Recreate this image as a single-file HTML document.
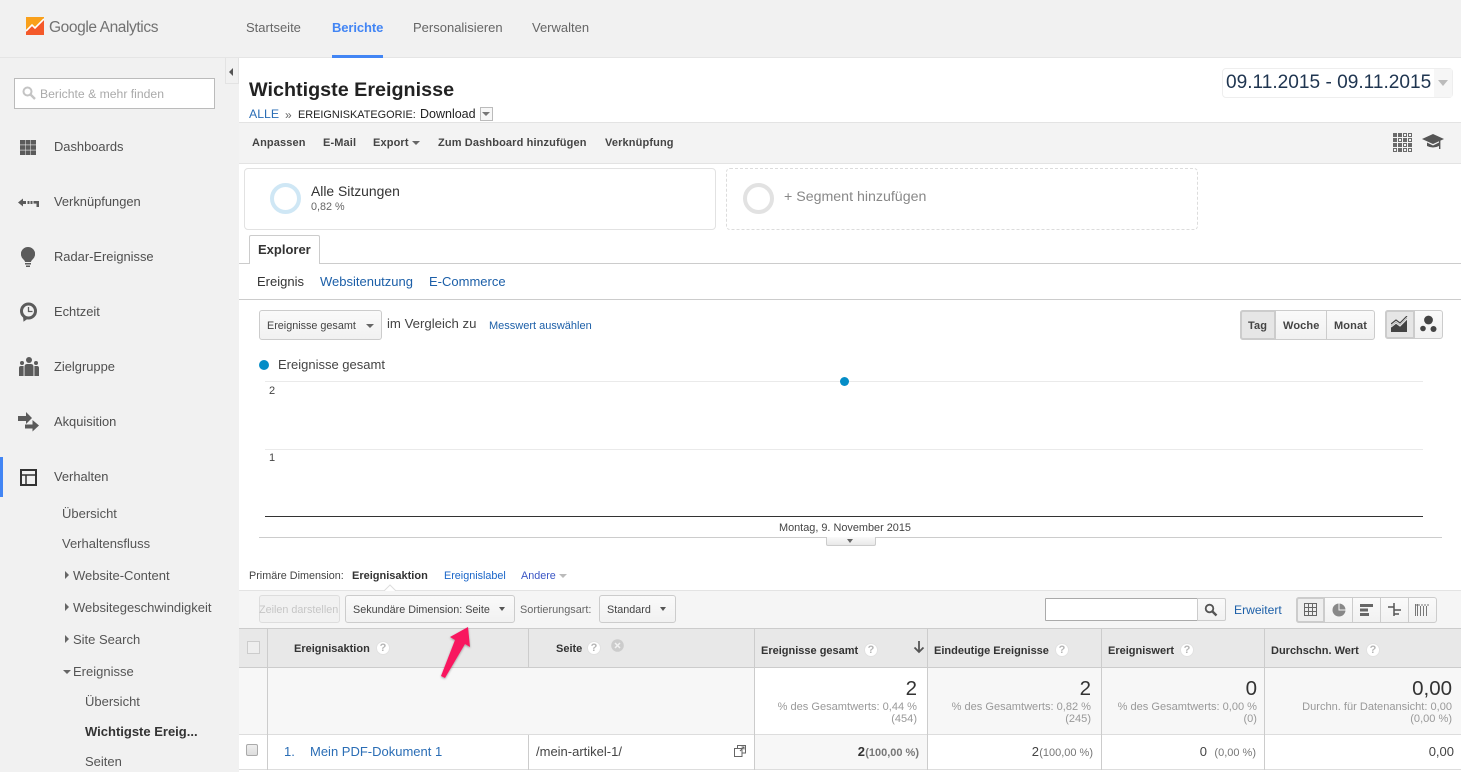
<!DOCTYPE html>
<html lang="de"><head><meta charset="utf-8"><title>Google Analytics</title>
<style>
*{box-sizing:border-box}
html,body{margin:0;padding:0}
body{width:1461px;height:772px;position:relative;overflow:hidden;background:#fff;font-family:"Liberation Sans",Arial,sans-serif;font-size:12px;color:#333}
.t{position:absolute;white-space:nowrap;line-height:16px;height:16px}
.b{position:absolute}
.r{text-align:right}
.s{font-size:12.9px;color:#4f4f4f}
.n{font-size:13px;color:#555}
.tb{font-size:11px;font-weight:bold;color:#444;letter-spacing:.13px}
.l{color:#1c5fa8}
.h{font-size:11px;font-weight:bold;color:#333}
.q{position:absolute;width:14px;height:14px;border-radius:50%;background:#fff;border:1px solid #e2e2e2;color:#b5b5b5;font-size:11px;font-weight:bold;line-height:12px;text-align:center}
.g{font-size:11.05px;color:#999}
.big{font-size:20.5px;color:#333;line-height:24px;height:24px}
.btn{position:absolute;border:1px solid #ccc;border-radius:3px;background:linear-gradient(#fafafa,#f1f1f1)}
.tri{position:absolute;width:0;height:0;border-left:4px solid transparent;border-right:4px solid transparent;border-top:4px solid #666}
svg{position:absolute;display:block}
</style></head><body>

<!-- top bar -->
<div class="b" style="left:0;top:0;width:1461px;height:58px;background:#f1f1f1;border-bottom:1px solid #e5e5e5"></div>
<svg style="left:26px;top:17px" width="18" height="18" viewBox="0 0 18 18"><rect width="18" height="18" fill="#f9a01b"/><path d="M0 18V14L6 8L9 11L18 3V18Z" fill="#f4592a"/><path d="M0 14L6 8L9 11L18 2" fill="none" stroke="#fff" stroke-width="1.600"/></svg>
<div class="t" style="left:49px;top:20px;font-size:15.500px;color:#727272;letter-spacing:-.4px">Google Analytics</div>
<div class="t" style="left:246px;top:20px;font-size:13px;color:#666">Startseite</div>
<div class="t" style="left:332px;top:20px;font-size:13px;font-weight:bold;color:#4285f4;letter-spacing:-.1px">Berichte</div>
<div class="b" style="left:332px;top:55px;width:51px;height:3px;background:#4285f4"></div>
<div class="t" style="left:413px;top:20px;font-size:13px;color:#666">Personalisieren</div>
<div class="t" style="left:532px;top:20px;font-size:13px;color:#666">Verwalten</div>

<!-- sidebar -->
<div class="b" style="left:0;top:58px;width:239px;height:714px;background:#f1f1f1"></div>
<div class="b" style="left:225px;top:58px;width:14px;height:26px;background:#f1f1f1;border:1px solid #e3e3e3;border-top:0"></div>
<div class="b" style="left:229px;top:68px;width:0;height:0;border-top:4px solid transparent;border-bottom:4px solid transparent;border-right:4px solid #555"></div>
<div class="b" style="left:14px;top:78px;width:201px;height:31px;background:#fff;border:1px solid #bbb"></div>
<svg style="left:22px;top:86px" width="14" height="14" viewBox="0 0 14 14"><circle cx="5.500" cy="5.500" r="4" fill="none" stroke="#c4c4c4" stroke-width="2"/><path d="M8.500 8.500L13 13" stroke="#c4c4c4" stroke-width="2.400"/></svg>
<div class="t" style="left:40px;top:86px;font-size:12.200px;color:#aaa">Berichte &amp; mehr finden</div>

<svg style="left:20px;top:140px" width="16" height="15" viewBox="0 0 16 15" fill="#5b5b5b"><rect width="5" height="4.600"/><rect x="5.500" width="5" height="4.600"/><rect x="11" width="5" height="4.600"/><rect y="5.200" width="5" height="4.600"/><rect x="5.500" y="5.200" width="5" height="4.600"/><rect x="11" y="5.200" width="5" height="4.600"/><rect y="10.400" width="5" height="4.600"/><rect x="5.500" y="10.400" width="5" height="4.600"/><rect x="11" y="10.400" width="5" height="4.600"/></svg>
<div class="t s" style="left:54px;top:139px">Dashboards</div>

<svg style="left:18px;top:197px" width="22" height="11" viewBox="0 0 22 11" fill="#5b5b5b"><path d="M0 5.500L5 1.500V4H8V7H5V9.500Z"/><rect x="9.500" y="4" width="2" height="3"/><rect x="12.500" y="4" width="2" height="3"/><rect x="15.500" y="4" width="5" height="2.600"/><rect x="18.500" y="4" width="2.500" height="6"/></svg>
<div class="t s" style="left:54px;top:194px">Verknüpfungen</div>

<svg style="left:21px;top:247px" width="14" height="21" viewBox="0 0 14 21" fill="#5b5b5b"><path d="M7 0A7 7 0 0 1 12 12C11 13 10 14 10 15H4C4 14 3 13 2 12A7 7 0 0 1 7 0Z"/><rect x="4" y="16" width="6" height="1.500"/><rect x="5" y="18.500" width="4" height="1.500"/></svg>
<div class="t s" style="left:54px;top:249px">Radar-Ereignisse</div>

<svg style="left:20px;top:302px" width="18" height="20" viewBox="0 0 18 20"><path d="M3 14L3.500 19.800L8 16.500Z" fill="#5b5b5b"/><circle cx="8.500" cy="9" r="7" fill="#f1f1f1" stroke="#5b5b5b" stroke-width="3"/><path d="M8.500 5V9.500H12.500" fill="none" stroke="#5b5b5b" stroke-width="1.300"/></svg>
<div class="t s" style="left:54px;top:304px">Echtzeit</div>

<svg style="left:19px;top:357px" width="20" height="19" viewBox="0 0 20 19" fill="#5b5b5b"><circle cx="10" cy="3" r="3"/><circle cx="3" cy="6" r="2"/><circle cx="17" cy="6" r="2"/><path d="M5.500 19V10Q5.500 7 8 7H12Q14.500 7 14.500 10V19Z"/><path d="M0 19V11Q0 9 2 9H4.600V19Z"/><path d="M15.400 19V9H18Q20 9 20 11V19Z"/></svg>
<div class="t s" style="left:54px;top:359px">Zielgruppe</div>

<svg style="left:18px;top:412px" width="21" height="20" viewBox="0 0 21 20" fill="#5b5b5b"><path d="M0 4H8V0L14 6L8 12V9H0Z"/><path d="M7 12.500H14.500V8L21 13.500L14.500 19.500V16.500H7Z"/></svg>
<div class="t s" style="left:54px;top:414px">Akquisition</div>

<div class="b" style="left:0;top:457px;width:3px;height:40px;background:#4285f4"></div>
<svg style="left:20px;top:469px" width="17" height="17" viewBox="0 0 17 17" fill="none" stroke="#333" stroke-width="1.500"><rect x="1" y="1" width="15" height="15" stroke-width="2"/><path d="M1 6H16M6 6V16"/></svg>
<div class="t s" style="left:54px;top:469px">Verhalten</div>

<div class="t n" style="left:62px;top:506px">Übersicht</div>
<div class="t n" style="left:62px;top:536px">Verhaltensfluss</div>
<div class="b" style="left:65px;top:571px;width:0;height:0;border-top:4px solid transparent;border-bottom:4px solid transparent;border-left:4px solid #666"></div>
<div class="t n" style="left:73px;top:568px">Website-Content</div>
<div class="b" style="left:65px;top:603px;width:0;height:0;border-top:4px solid transparent;border-bottom:4px solid transparent;border-left:4px solid #666"></div>
<div class="t n" style="left:73px;top:600px">Websitegeschwindigkeit</div>
<div class="b" style="left:65px;top:635px;width:0;height:0;border-top:4px solid transparent;border-bottom:4px solid transparent;border-left:4px solid #666"></div>
<div class="t n" style="left:73px;top:632px">Site Search</div>
<div class="tri" style="left:63px;top:670px"></div>
<div class="t n" style="left:73px;top:664px">Ereignisse</div>
<div class="t n" style="left:85px;top:694px">Übersicht</div>
<div class="t n" style="left:85px;top:724px;font-weight:bold;color:#333">Wichtigste Ereig...</div>
<div class="t n" style="left:85px;top:754px">Seiten</div>

<!-- title -->
<div class="t" style="left:249px;top:77px;font-size:19.750px;font-weight:bold;color:#222;line-height:26px;height:26px">Wichtigste Ereignisse</div>
<div class="t l" style="left:249px;top:106px;font-size:12.300px;color:#2a6db5">ALLE</div>
<div class="t" style="left:285px;top:107px;font-size:12px;color:#666">»</div>
<div class="t" style="left:298px;top:107px;font-size:10.900px;color:#222">EREIGNISKATEGORIE:</div>
<div class="t" style="left:420px;top:106px;font-size:12.500px;color:#222">Download</div>
<div class="b" style="left:480px;top:107px;width:13px;height:14px;border:1px solid #bbb;background:#f7f7f7"></div>
<div class="tri" style="left:482px;top:112px;border-top-color:#777"></div>

<div class="b" style="left:1222px;top:68px;width:231px;height:30px;border:1px solid #eee;border-radius:4px;background:#fff"></div>
<div class="b" style="left:1434px;top:69px;width:18px;height:28px;background:#f6f6f6"></div>
<div class="t" style="left:1226px;top:73px;font-size:19.100px;line-height:20px;height:20px;color:#1f3550">09.11.2015 - 09.11.2015</div>
<div class="tri" style="left:1438px;top:80px;border-left-width:5px;border-right-width:5px;border-top:6px solid #bbb"></div>

<!-- action bar -->
<div class="b" style="left:239px;top:122px;width:1222px;height:42px;background:#f3f3f3;border-top:1px solid #e3e3e3;border-bottom:1px solid #e3e3e3"></div>
<div class="t tb" style="left:252px;top:135px">Anpassen</div>
<div class="t tb" style="left:323px;top:135px">E-Mail</div>
<div class="t tb" style="left:373px;top:135px">Export</div>
<div class="tri" style="left:412px;top:141px"></div>
<div class="t tb" style="left:438px;top:135px">Zum Dashboard hinzufügen</div>
<div class="t tb" style="left:605px;top:135px">Verknüpfung</div>
<svg style="left:1393px;top:133px" width="19" height="19" viewBox="0 0 19 19" fill="#6a6a6a"><rect width="4" height="4"/><rect x="5" width="4" height="4"/><rect x="10.500" y=".5" width="3" height="3" fill="none" stroke="#6a6a6a"/><rect x="15.500" y=".5" width="3" height="3" fill="none" stroke="#6a6a6a"/><rect y="5" width="4" height="4"/><rect x="5.500" y="5.500" width="3" height="3" fill="none" stroke="#6a6a6a"/><rect x="10" y="5" width="4" height="4"/><rect x="15.500" y="5.500" width="3" height="3" fill="none" stroke="#6a6a6a"/><rect y="10" width="4" height="4"/><rect x="5" y="10" width="4" height="4"/><rect x="10.500" y="10.500" width="3" height="3" fill="none" stroke="#6a6a6a"/><rect x="15" y="10" width="4" height="4"/><rect x=".5" y="15.500" width="3" height="3" fill="none" stroke="#6a6a6a"/><rect x="5" y="15" width="4" height="4"/><rect x="10.500" y="15.500" width="3" height="3" fill="none" stroke="#6a6a6a"/><rect x="15.500" y="15.500" width="3" height="3" fill="none" stroke="#6a6a6a"/></svg>
<svg style="left:1422px;top:134px" width="22" height="16" viewBox="0 0 22 16" fill="#555"><path d="M0 5L11 0L22 5L11 10Z"/><path d="M5 8.500L11 11.500L17 8.500V12Q11 15 5 12Z"/><rect x="17" y="6" width="1.400" height="9"/></svg>

<!-- segments -->
<div class="b" style="left:244px;top:168px;width:472px;height:62px;border:1px solid #e2e2e2;border-radius:4px"></div>
<div class="b" style="left:270px;top:183px;width:31px;height:31px;border-radius:50%;border:4px solid #cfe7f5"></div>
<div class="t" style="left:311px;top:183px;font-size:13.900px;color:#333">Alle Sitzungen</div>
<div class="t" style="left:311px;top:199px;font-size:10.800px;color:#666">0,82 %</div>
<div class="b" style="left:726px;top:168px;width:472px;height:62px;border:1px dashed #dcdcdc;border-radius:4px"></div>
<div class="b" style="left:743px;top:183px;width:31px;height:31px;border-radius:50%;border:4px solid #e2e2e2"></div>
<div class="t" style="left:784px;top:189px;font-size:14.200px;color:#888">+ Segment hinzufügen</div>

<!-- tabs -->
<div class="b" style="left:239px;top:263px;width:1222px;height:1px;background:#ccc"></div>
<div class="b" style="left:249px;top:235px;width:71px;height:29px;background:#fff;border:1px solid #ccc;border-bottom:0;border-radius:2px 2px 0 0"></div>
<div class="t" style="left:258px;top:242px;font-size:13px;font-weight:bold;color:#333">Explorer</div>
<div class="t" style="left:257px;top:274px;font-size:13px;color:#333">Ereignis</div>
<div class="t l" style="left:320px;top:274px;font-size:13px">Websitenutzung</div>
<div class="t l" style="left:429px;top:274px;font-size:13px">E-Commerce</div>
<div class="b" style="left:239px;top:299px;width:1222px;height:1px;background:#ccc"></div>

<!-- chart controls -->
<div class="btn" style="left:259px;top:310px;width:123px;height:30px"></div>
<div class="t" style="left:267px;top:318px;font-size:10.800px;color:#444">Ereignisse gesamt</div>
<div class="tri" style="left:366px;top:324px;border-top-color:#666"></div>
<div class="t" style="left:387px;top:316px;font-size:13.200px;color:#444">im Vergleich zu</div>
<div class="t l" style="left:489px;top:318px;font-size:11px">Messwert auswählen</div>

<div class="btn" style="left:1240px;top:310px;width:135px;height:30px"></div>
<div class="b" style="left:1240px;top:310px;width:36px;height:30px;background:#e6e6e6;border:2px solid #ccc;border-radius:3px 0 0 3px"></div>
<div class="b" style="left:1326px;top:311px;width:1px;height:28px;background:#ccc"></div>
<div class="t tb" style="left:1248px;top:318px">Tag</div>
<div class="t tb" style="left:1283px;top:318px">Woche</div>
<div class="t tb" style="left:1334px;top:318px">Monat</div>
<div class="btn" style="left:1385px;top:310px;width:58px;height:29px"></div>
<div class="b" style="left:1385px;top:310px;width:30px;height:29px;background:#e6e6e6;border:2px solid #ccc;border-radius:3px 0 0 3px"></div>
<svg style="left:1391px;top:316px" width="17" height="17" viewBox="0 0 17 17"><path d="M0 16V10L5 6L9 9L16 2V16Z" fill="#444"/><path d="M0 11L5 7L9 10L16 3" fill="none" stroke="#e6e6e6" stroke-width="1.200"/><path d="M0 8L5 4L9 7L16 0" fill="none" stroke="#444" stroke-width="1.200"/></svg>
<svg style="left:1419px;top:315px" width="19" height="18" viewBox="0 0 19 18" fill="#444"><circle cx="9.500" cy="5" r="4.400"/><circle cx="4" cy="13.500" r="2.800"/><circle cx="14.500" cy="14" r="3"/></svg>

<!-- chart -->
<div class="b" style="left:259px;top:360px;width:10px;height:10px;border-radius:50%;background:#058dc7"></div>
<div class="t" style="left:278px;top:357px;font-size:13px;color:#444">Ereignisse gesamt</div>
<div class="b" style="left:265px;top:381px;width:1158px;height:1px;background:#eaeaea"></div>
<div class="b" style="left:265px;top:449px;width:1158px;height:1px;background:#eaeaea"></div>
<div class="b" style="left:265px;top:516px;width:1158px;height:1px;background:#333"></div>
<div class="b" style="left:840px;top:377px;width:9px;height:9px;border-radius:50%;background:#058dc7"></div>
<div class="t" style="left:269px;top:383px;font-size:11px;color:#444">2</div>
<div class="t" style="left:269px;top:450px;font-size:11px;color:#444">1</div>
<div class="t" style="left:779px;top:520px;font-size:10.900px;color:#444">Montag, 9. November 2015</div>
<div class="b" style="left:259px;top:537px;width:1183px;height:1px;background:#ccc"></div>
<div class="b" style="left:826px;top:537px;width:50px;height:9px;background:linear-gradient(#fafafa,#e8e8e8);border:1px solid #ccc;border-top:0;border-radius:0 0 2px 2px"></div>
<div class="tri" style="left:847px;top:539px;border-left-width:3.500px;border-right-width:3.500px"></div>

<!-- dimension -->
<div class="t" style="left:249px;top:568px;font-size:10.800px;color:#444">Primäre Dimension:</div>
<div class="t" style="left:352px;top:568px;font-size:11px;font-weight:bold;color:#333">Ereignisaktion</div>
<div class="t l" style="left:444px;top:568px;font-size:10.800px;color:#1a66c9">Ereignislabel</div>
<div class="t l" style="left:521px;top:568px;font-size:10.800px;color:#3a55c4">Andere</div>
<div class="tri" style="left:559px;top:574px;border-top-color:#bbb"></div>

<!-- toolbar -->
<div class="b" style="left:239px;top:590px;width:1222px;height:38px;background:#f5f5f5;border-top:1px solid #e3e3e3"></div>
<svg style="left:384px;top:584px" width="12" height="7" viewBox="0 0 12 7"><path d="M0 7L6 1L12 7" fill="#fff" stroke="#ddd"/></svg>
<div class="b" style="left:259px;top:595px;width:81px;height:28px;border:1px solid #ddd;border-radius:3px;background:#f1f1f1"></div>
<div class="t" style="left:259px;top:602px;font-size:10.800px;color:#c6c6c6">Zeilen darstellen</div>
<div class="btn" style="left:345px;top:595px;width:170px;height:28px"></div>
<div class="t" style="left:353px;top:602px;font-size:10.800px;color:#444">Sekundäre Dimension: Seite</div>
<div class="tri" style="left:499px;top:607px;border-left-width:3.500px;border-right-width:3.500px;border-top-color:#555"></div>
<div class="t" style="left:520px;top:602px;font-size:10.900px;color:#666">Sortierungsart:</div>
<div class="btn" style="left:599px;top:595px;width:77px;height:28px"></div>
<div class="t" style="left:607px;top:602px;font-size:10.800px;color:#444">Standard</div>
<div class="tri" style="left:660px;top:607px;border-left-width:3.500px;border-right-width:3.500px;border-top-color:#555"></div>

<div class="b" style="left:1045px;top:598px;width:153px;height:23px;background:#fff;border:1px solid #aaa;border-radius:1px"></div>
<div class="btn" style="left:1197px;top:598px;width:29px;height:23px;border-radius:0 2px 2px 0"></div>
<svg style="left:1204px;top:603px" width="14" height="14" viewBox="0 0 14 14"><circle cx="5.500" cy="5.500" r="3.800" fill="none" stroke="#555" stroke-width="1.800"/><path d="M8.500 8.500L12.500 12.500" stroke="#555" stroke-width="2.400"/></svg>
<div class="t l" style="left:1234px;top:602px;font-size:12.100px">Erweitert</div>

<div class="btn" style="left:1296px;top:597px;width:141px;height:26px"></div>
<div class="b" style="left:1296px;top:597px;width:29px;height:26px;background:#eee;border:2px solid #ccc;border-radius:3px 0 0 3px"></div>
<div class="b" style="left:1352px;top:598px;width:1px;height:24px;background:#ccc"></div>
<div class="b" style="left:1380px;top:598px;width:1px;height:24px;background:#ccc"></div>
<div class="b" style="left:1408px;top:598px;width:1px;height:24px;background:#ccc"></div>
<svg style="left:1304px;top:603px" width="13" height="13" viewBox="0 0 13 13" fill="none" stroke="#666"><rect x=".5" y=".5" width="12" height="12"/><path d="M4.500 0V13M8.500 0V13M0 4.500H13M0 8.500H13"/></svg>
<svg style="left:1332px;top:603px" width="14" height="14" viewBox="0 0 14 14"><circle cx="7" cy="7" r="6.500" fill="#888"/><path d="M7 0V7H14" fill="none" stroke="#f5f5f5" stroke-width="1"/></svg>
<svg style="left:1360px;top:604px" width="14" height="12" viewBox="0 0 14 12" fill="#666"><rect width="13" height="3"/><rect y="4.500" width="8" height="3"/><rect y="9" width="9" height="3"/></svg>
<svg style="left:1388px;top:603px" width="14" height="14" viewBox="0 0 14 14" fill="none" stroke="#555" stroke-width="1.500"><path d="M6 0V13M0 4H6M6 7H13M6 11H11"/></svg>
<svg style="left:1415px;top:604px" width="14" height="12" viewBox="0 0 14 12" fill="none" stroke="#777"><path d="M.5 0V12M2.500 0V12" stroke-width="1"/><path d="M0 1H14" stroke-dasharray="2 1"/><path d="M5.500 2V12M8.500 2V12M11.500 2V12"/></svg>

<!-- table -->
<div class="b" style="left:239px;top:628px;width:1222px;height:40px;background:#e8e8e8;border-top:1px solid #ccc;border-bottom:1px solid #ccc"></div>
<div class="b" style="left:239px;top:668px;width:1222px;height:67px;background:#f7f7f7"></div>
<div class="b" style="left:754px;top:668px;width:174px;height:67px;background:#fff"></div>
<div class="b" style="left:239px;top:734px;width:1222px;height:1px;background:#ddd"></div>
<div class="b" style="left:239px;top:735px;width:1222px;height:34px;background:#fff"></div>
<div class="b" style="left:754px;top:735px;width:174px;height:34px;background:#f7f7f7"></div>
<div class="b" style="left:239px;top:769px;width:1222px;height:1px;background:#ddd"></div>
<div class="b" style="left:267px;top:628px;width:1px;height:142px;background:#ccc"></div>
<div class="b" style="left:528px;top:628px;width:1px;height:39px;background:#ccc"></div>
<div class="b" style="left:528px;top:735px;width:1px;height:35px;background:#ccc"></div>
<div class="b" style="left:754px;top:628px;width:1px;height:142px;background:#ccc"></div>
<div class="b" style="left:927px;top:628px;width:1px;height:142px;background:#ccc"></div>
<div class="b" style="left:1101px;top:628px;width:1px;height:142px;background:#ccc"></div>
<div class="b" style="left:1264px;top:628px;width:1px;height:142px;background:#ccc"></div>

<div class="b" style="left:247px;top:641px;width:13px;height:13px;border:1px solid #ccc;background:#eee"></div>
<div class="t h" style="left:294px;top:641px">Ereignisaktion</div><div class="q" style="left:376px;top:641px">?</div>
<div class="t h" style="left:556px;top:641px">Seite</div><div class="q" style="left:587px;top:641px">?</div>
<svg style="left:611px;top:639px" width="13" height="13" viewBox="0 0 13 13"><circle cx="6.500" cy="6.500" r="6.300" fill="#ccc"/><path d="M4 4L9 9M9 4L4 9" stroke="#f1f1f1" stroke-width="1.500"/></svg>
<div class="t h" style="left:761px;top:643px">Ereignisse gesamt</div><div class="q" style="left:864px;top:643px">?</div>
<svg style="left:913px;top:641px" width="12" height="13" viewBox="0 0 12 13" fill="none" stroke="#555" stroke-width="1.800"><path d="M6 0V11M1.500 6.500L6 11L10.500 6.500"/></svg>
<div class="t h" style="left:934px;top:643px">Eindeutige Ereignisse</div><div class="q" style="left:1055px;top:643px">?</div>
<div class="t h" style="left:1108px;top:643px">Ereigniswert</div><div class="q" style="left:1180px;top:643px">?</div>
<div class="t h" style="left:1271px;top:643px">Durchschn. Wert</div><div class="q" style="left:1366px;top:643px">?</div>

<div class="t big r" style="right:544px;top:677px">2</div>
<div class="t g r" style="right:544px;top:699px">% des Gesamtwerts: 0,44 %</div>
<div class="t g r" style="right:544px;top:711px">(454)</div>
<div class="t big r" style="right:370px;top:677px">2</div>
<div class="t g r" style="right:370px;top:699px">% des Gesamtwerts: 0,82 %</div>
<div class="t g r" style="right:370px;top:711px">(245)</div>
<div class="t big r" style="right:204px;top:677px">0</div>
<div class="t g r" style="right:204px;top:699px">% des Gesamtwerts: 0,00 %</div>
<div class="t g r" style="right:204px;top:711px">(0)</div>
<div class="t big r" style="right:9px;top:677px">0,00</div>
<div class="t g r" style="right:9px;top:699px">Durchn. für Datenansicht: 0,00</div>
<div class="t g r" style="right:9px;top:711px">(0,00 %)</div>

<div class="b" style="left:246px;top:744px;width:12px;height:12px;border:1px solid #aaa;border-radius:2px;background:linear-gradient(#eee,#ddd)"></div>
<div class="t l" style="left:284px;top:744px;font-size:13px;color:#2a6db5">1.</div>
<div class="t l" style="left:310px;top:744px;font-size:13px;color:#2a6db5">Mein PDF-Dokument 1</div>
<div class="t" style="left:536px;top:744px;font-size:13px;color:#444">/mein-artikel-1/</div>
<svg style="left:734px;top:745px" width="12" height="12" viewBox="0 0 12 12" fill="none" stroke="#666"><rect x="3.500" y=".5" width="8" height="7.500"/><rect x=".5" y="3.500" width="7.500" height="8" fill="#fff"/><path d="M6 6L10 2M7.500 2H10V4.500"/></svg>

<div class="t r" style="right:596px;top:744px;font-size:13px;font-weight:bold;color:#333">2</div>
<div class="t r" style="right:542px;top:745px;font-size:11px;font-weight:bold;color:#777">(100,00 %)</div>
<div class="t r" style="right:422px;top:744px;font-size:13px;color:#444">2</div>
<div class="t r" style="right:368px;top:745px;font-size:11px;color:#777">(100,00 %)</div>
<div class="t r" style="right:254px;top:744px;font-size:13px;color:#444">0</div>
<div class="t r" style="right:205px;top:745px;font-size:11px;color:#777">(0,00 %)</div>
<div class="t r" style="right:7px;top:744px;font-size:13px;color:#444">0,00</div>

<!-- arrow -->
<svg style="left:436px;top:622px" width="40" height="60" viewBox="0 0 40 60"><defs><filter id="sh" x="-30%" y="-30%" width="160%" height="160%"><feDropShadow dx="0" dy="1" stdDeviation="1" flood-color="#000" flood-opacity=".35"/></filter></defs><path d="M32 5L34 25L29 22L9 56L5 54L19 18L14 15Z" fill="#f8155f" filter="url(#sh)"/></svg>
</body></html>
